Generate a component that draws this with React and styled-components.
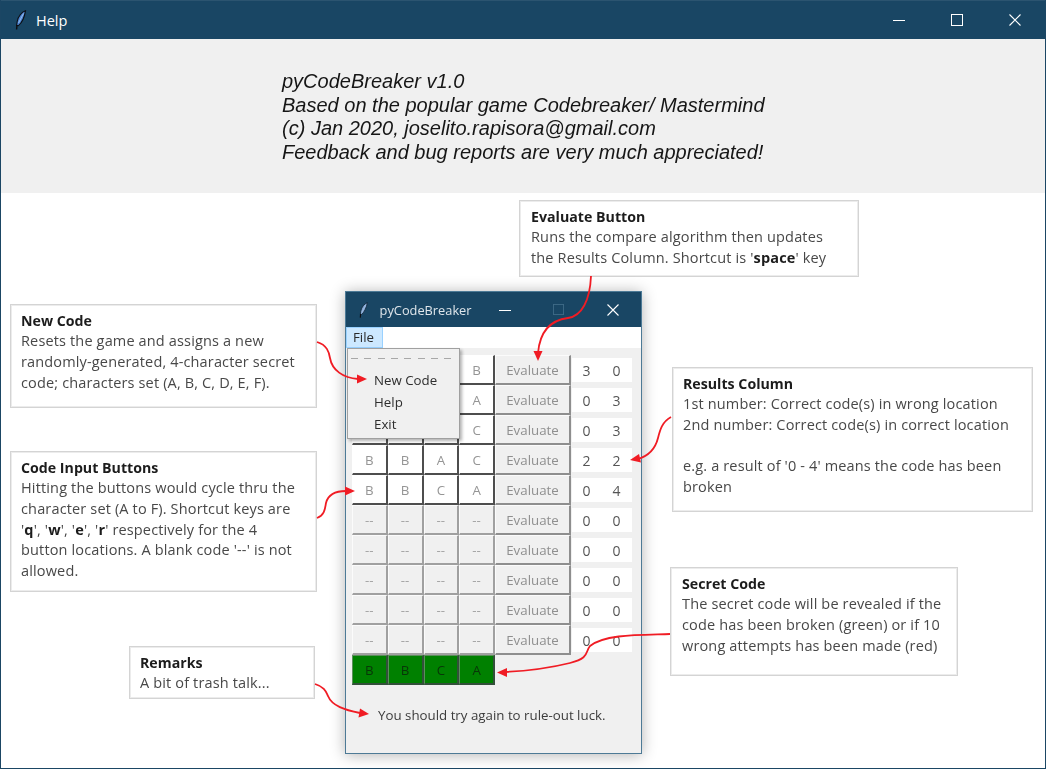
import React from "react"
import styled, { createGlobalStyle } from "styled-components"

const GlobalStyle = createGlobalStyle`
  html, body {
    margin: 0;
    padding: 0;
    background: #fff;
  }
`

const Frame = styled.div`
  width: 1046px;
  height: 769px;
  box-sizing: border-box;
  border: 1px solid #1b4664;
  border-top: none;
  display: flex;
  flex-direction: column;
  overflow: hidden;
  font-family: "Open Sans", "Liberation Sans", sans-serif;
`

const TitleBar = styled.div`
  height: 39px;
  flex: none;
  background: #194664;
  border-top: 1px solid #2b5470;
  box-sizing: border-box;
  display: flex;
  align-items: center;
  color: #fff;
  font-size: 14.5px;
  padding: 0 1px 0 14px;
`

const TitleText = styled.span`
  margin-left: 9px;
  flex: 1;
`

const Caption = styled.div`
  width: 58px;
  height: 100%;
  display: flex;
  align-items: center;
  justify-content: center;
`

const Banner = styled.div`
  height: 154px;
  flex: none;
  background: #f0f0f0;
  box-sizing: border-box;
  padding: 31px 0 0 281px;
  font: italic 20px/23.7px "Liberation Sans", Arial, sans-serif;
  color: #161616;
  filter: blur(0.4px);
`

const Canvas = styled.div`
  position: relative;
  flex: 1;
  background: #fff;
  filter: blur(0.45px);
`

const Callout = styled.div`
  position: absolute;
  left: ${p => p.$x}px;
  top: ${p => p.$y}px;
  width: ${p => p.$w}px;
  height: ${p => p.$h}px;
  box-sizing: border-box;
  border: 1px solid #d4d4d4;
  outline: 1px solid #ececec;
  outline-offset: -2px;
  padding: 5.5px 0 0 ${p => p.$inset || 10}px;
  font-size: 14.5px;
  letter-spacing: 0.15px;
  line-height: 20.7px;
  color: #484848;
  white-space: nowrap;

  b {
    color: #1c1c1c;
    font-weight: 700;
  }
`

const Heading = styled.div`
  color: #1c1c1c;
  font-size: 14.2px;
  letter-spacing: 0;
  font-weight: 700;
`

const AppWindow = styled.div`
  position: absolute;
  left: 344px;
  top: 98px;
  width: 297px;
  height: 463px;
  box-sizing: border-box;
  border: 1px solid #4d7a96;
  background: #f0f0f0;
  box-shadow: 0 1px 14px rgba(0, 0, 0, 0.3);
  display: flex;
  flex-direction: column;
`

const AppTitle = styled.div`
  height: 35px;
  flex: none;
  background: #194664;
  display: flex;
  align-items: center;
  color: #dfe6eb;
  font-size: 12.8px;
  padding-left: 13px;
`

const AppTitleText = styled.span`
  flex: none;
  margin-left: 11px;
  width: 98px;
  white-space: nowrap;
`

const AppCaption = styled.div`
  flex: none;
  width: 54px;
  display: flex;
  justify-content: center;
`

const MenuBar = styled.div`
  height: 21px;
  flex: none;
  background: #fff;
  display: flex;
`

const MenuTitle = styled.div`
  width: 37px;
  box-sizing: border-box;
  background: #cce8ff;
  border: 1px solid #99d1ff;
  color: #2a2a2a;
  font-size: 13.3px;
  line-height: 18px;
  padding-left: 6px;
`

const Popup = styled.div`
  position: absolute;
  left: 1px;
  top: 56px;
  width: 113px;
  height: 91px;
  box-sizing: border-box;
  background: #f0f0f0;
  border: 1px solid #a0a0a0;
  box-shadow: 2px 2px 3px rgba(0, 0, 0, 0.3);
  z-index: 2;
  padding: 9px 2px 0 3px;
  color: #2e2e2e;
  font-size: 13.3px;
`

const Tearoff = styled.div`
  height: 1px;
  margin-bottom: 10px;
  background: repeating-linear-gradient(90deg, #a8a8a8 0 7px, transparent 7px 13.3px);
`

const PopupItem = styled.div`
  height: 22px;
  line-height: 22px;
  padding-left: 23px;
`

const Board = styled.div`
  padding: 7px 0 0 6px;
  display: flex;
  flex-direction: column;
`

const Row = styled.div`
  display: grid;
  grid-template-columns: repeat(4, 35.75px) 76px 61px;
  height: 30px;
`

const Cell = styled.div`
  box-sizing: border-box;
  display: flex;
  align-items: center;
  justify-content: center;
  font-size: 13.3px;
  color: ${p => (p.$kind === "secret" ? "#083608" : p.$kind === "live" ? "#959595" : "#a2a2a2")};
  background: ${p => (p.$kind === "secret" ? "#008000" : p.$kind === "live" ? "#fff" : "#f0f0f0")};
  border-right: 2px solid ${p => (p.$kind === "secret" ? "#33503a" : p.$kind === "live" ? "#4e4e4e" : "#a0a0a0")};
  border-bottom: 2px solid ${p => (p.$kind === "secret" ? "#33503a" : p.$kind === "live" ? "#4e4e4e" : "#a0a0a0")};
  border-top: 1px solid ${p => (p.$kind === "secret" ? "#5c8f5c" : p.$kind === "live" ? "#fff" : "#fbfbfb")};
  border-left: 1px solid ${p => (p.$kind === "secret" ? "#5c8f5c" : p.$kind === "live" ? "#fff" : "#fbfbfb")};
`

const EvalButton = styled.div`
  box-sizing: border-box;
  display: flex;
  align-items: center;
  justify-content: center;
  font-size: 13.3px;
  color: #8f8f8f;
  background: #f0f0f0;
  border-top: 1px solid #fbfbfb;
  border-left: 1px solid #fbfbfb;
  border-right: 2px solid #8e8e8e;
  border-bottom: 2px solid #8e8e8e;
`

const Results = styled.div`
  margin: 3px 0 3px 1px;
  background: #fff;
  display: grid;
  grid-template-columns: 29px 31px;
  align-items: center;
  justify-items: center;
  font-size: 14px;
  color: #555;
`

const Remark = styled.div`
  margin: 20px 0 0 32px;
  font-size: 13.3px;
  line-height: 20px;
  color: #3c3c3c;
`

const Arrows = styled.svg`
  position: absolute;
  inset: 0;
  width: 1044px;
  height: 575px;
  z-index: 3;
  pointer-events: none;
`

const Feather = ({ height = 20, light }) => (
  <svg width={height * 0.6} height={height} viewBox="0 0 12 20">
    <path
      d="M10.5 .8C7 2 3 6 2.2 11.5L1.6 15.5 3.4 15.6C6.5 13 9.5 7 10.5 .8Z"
      fill={light ? "#7fa3cf" : "#4d86d6"}
      stroke={light ? "#12283a" : "#0c0f14"}
      strokeWidth="1.1"
    />
    <path d="M2 15L1.6 19.5" stroke="#0c0f14" strokeWidth="1.4" />
    <path d="M8.5 3.5L3.5 13" stroke="#b9d3f2" strokeWidth=".7" />
  </svg>
)

const Minimize = ({ size = 12, color = "#fff" }) => (
  <svg width={size} height={size} viewBox="0 0 12 12">
    <path d="M0 6.5H12" stroke={color} strokeWidth="1" />
  </svg>
)

const Maximize = ({ size = 12, color = "#fff" }) => (
  <svg width={size} height={size} viewBox="0 0 12 12">
    <rect x=".5" y=".5" width="11" height="11" fill="none" stroke={color} strokeWidth="1" />
  </svg>
)

const Close = ({ size = 12, color = "#fff" }) => (
  <svg width={size} height={size} viewBox="0 0 12 12">
    <path d="M.5 .5L11.5 11.5M11.5 .5L.5 11.5" stroke={color} strokeWidth="1.1" />
  </svg>
)

// the first three columns of the top rows sit behind the open File menu
const rows = [
  { code: ["", "", "", "B"], live: true, score: [3, 0] },
  { code: ["", "", "", "A"], live: true, score: [0, 3] },
  { code: ["", "", "", "C"], live: true, score: [0, 3] },
  { code: ["B", "B", "A", "C"], live: true, score: [2, 2] },
  { code: ["B", "B", "C", "A"], live: true, score: [0, 4] },
  ...Array.from({ length: 5 }, () => ({ code: ["--", "--", "--", "--"], live: false, score: [0, 0] })),
]

const arrows = [
  { d: "M591 276C590 300 582 316 568 318C552 320 540 330 538 353", head: "538,361 533.5,351 542.5,351" },
  { d: "M317 342C327 345 329 352 330 358C332 370 343 378 358 379", head: "367,379 357,374.5 357,383.5" },
  { d: "M317 518C325 515 325 508 326 503C328 495 335 491 346 491", head: "355,491 345,486.5 345,495.5" },
  { d: "M671 417C662 422 660 430 658 438C655 450 648 456 638 459", head: "630,460 639,454 641,462.5" },
  { d: "M670 634C640 635 605 634 590 646C585 652 590 658 570 663C550 668 525 671 505 672", head: "497,672.5 507,668 507,677" },
  { d: "M315 684C325 687 326 692 328 696C332 706 345 710 360 713", head: "369,714 360,708.5 358.5,717.5" },
]

export default function App() {
  return (
    <Frame>
      <GlobalStyle />
      <TitleBar>
        <Feather />
        <TitleText>Help</TitleText>
        <Caption><Minimize /></Caption>
        <Caption><Maximize /></Caption>
        <Caption><Close /></Caption>
      </TitleBar>
      <Banner>
        pyCodeBreaker v1.0<br />
        Based on the popular game Codebreaker/ Mastermind<br />
        (c) Jan 2020, joselito.rapisora@gmail.com<br />
        Feedback and bug reports are very much appreciated!
      </Banner>
      <Canvas>
        <Callout $x={518} $y={7} $w={340} $h={77} $inset={11}>
          <Heading>Evaluate Button</Heading>
          Runs the compare algorithm then updates<br />
          the Results Column. Shortcut is '<b>space</b>' key
        </Callout>
        <Callout $x={9} $y={111} $w={307} $h={104}>
          <Heading>New Code</Heading>
          Resets the game and assigns a new<br />
          randomly-generated, 4-character secret<br />
          code; characters set (A, B, C, D, E, F).
        </Callout>
        <Callout $x={9} $y={258} $w={307} $h={141}>
          <Heading>Code Input Buttons</Heading>
          Hitting the buttons would cycle thru the<br />
          character set (A to F). Shortcut keys are<br />
          '<b>q</b>', '<b>w</b>', '<b>e</b>', '<b>r</b>' respectively for the 4<br />
          button locations. A blank code '--' is not<br />
          allowed.
        </Callout>
        <Callout $x={671} $y={174} $w={361} $h={145}>
          <Heading>Results Column</Heading>
          1st number: Correct code(s) in wrong location<br />
          2nd number: Correct code(s) in correct location<br />
          <br />
          e.g. a result of '0 - 4' means the code has been<br />
          broken
        </Callout>
        <Callout $x={669} $y={374} $w={288} $h={109} $inset={11}>
          <Heading>Secret Code</Heading>
          The secret code will be revealed if the<br />
          code has been broken (green) or if 10<br />
          wrong attempts has been made (red)
        </Callout>
        <Callout $x={128} $y={453} $w={186} $h={53}>
          <Heading>Remarks</Heading>
          A bit of trash talk...
        </Callout>

        <AppWindow>
          <AppTitle>
            <Feather height={16} light />
            <AppTitleText>pyCodeBreaker</AppTitleText>
            <AppCaption><Minimize /></AppCaption>
            <AppCaption><Maximize size={11} color="#3f6a87" /></AppCaption>
            <AppCaption><Close /></AppCaption>
          </AppTitle>
          <MenuBar>
            <MenuTitle>File</MenuTitle>
          </MenuBar>
          <Popup>
            <Tearoff />
            <PopupItem>New Code</PopupItem>
            <PopupItem>Help</PopupItem>
            <PopupItem>Exit</PopupItem>
          </Popup>
          <Board>
            {rows.map((row, i) => (
              <Row key={i}>
                {row.code.map((c, j) => (
                  <Cell key={j} $kind={row.live ? "live" : "blank"}>{c}</Cell>
                ))}
                <EvalButton>Evaluate</EvalButton>
                <Results>
                  <span>{row.score[0]}</span>
                  <span>{row.score[1]}</span>
                </Results>
              </Row>
            ))}
            <Row>
              {["B", "B", "C", "A"].map((c, j) => (
                <Cell key={j} $kind="secret">{c}</Cell>
              ))}
            </Row>
          </Board>
          <Remark>You should try again to rule-out luck.</Remark>
        </AppWindow>

        <Arrows viewBox="1 193 1044 575">
          {arrows.map((a, i) => (
            <g key={i}>
              <path d={a.d} fill="none" stroke="#f01c24" strokeWidth="1.8" />
              <polygon points={a.head} fill="#f01c24" />
            </g>
          ))}
        </Arrows>
      </Canvas>
    </Frame>
  )
}
